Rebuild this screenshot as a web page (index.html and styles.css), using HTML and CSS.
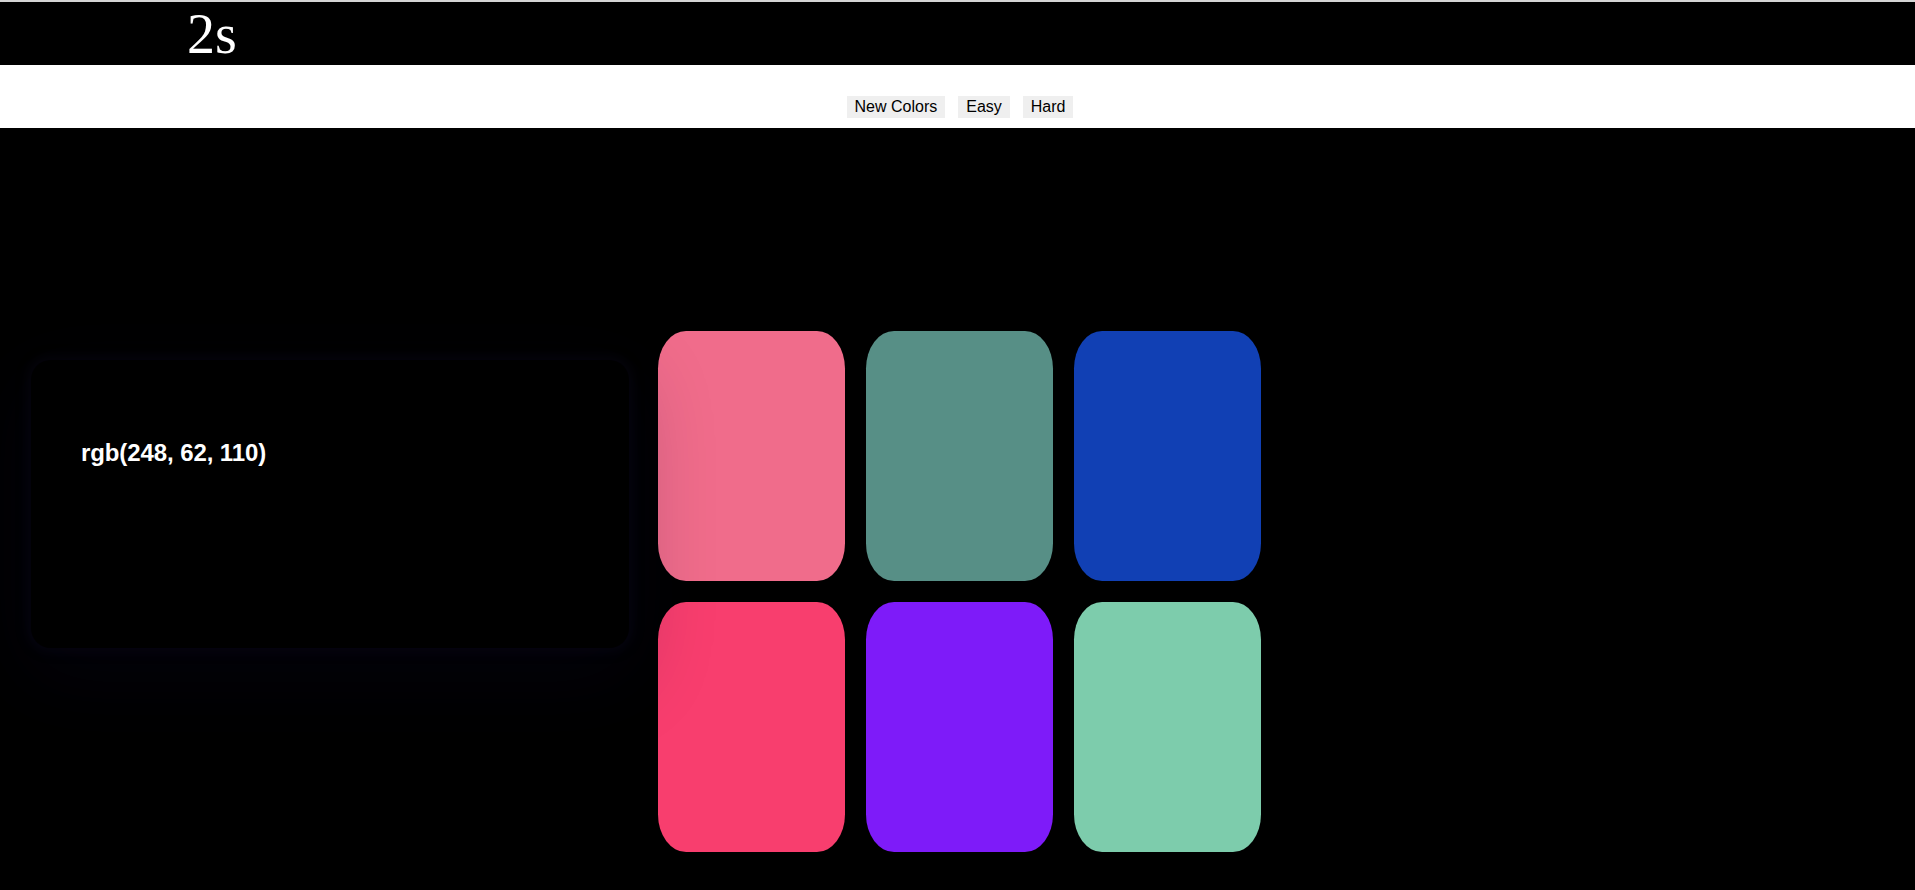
FILE: index.html
```html
<!DOCTYPE html>
<html lang="en">
<head>
<meta charset="utf-8">
<title>Color Game</title>
<link rel="stylesheet" href="styles.css">
</head>
<body>
  <header class="top-bar">
    <h1 class="timer">2s</h1>
  </header>
  <nav class="controls">
    <button class="btn">New Colors</button>
    <button class="btn">Easy</button>
    <button class="btn">Hard</button>
  </nav>
  <main class="board">
    <section class="target-card">
      <h2 class="target-text">rgb(248, 62, 110)</h2>
    </section>
    <section class="swatches">
      <div class="swatch swatch-pink"></div>
      <div class="swatch swatch-teal"></div>
      <div class="swatch swatch-blue"></div>
      <div class="swatch swatch-red"></div>
      <div class="swatch swatch-purple"></div>
      <div class="swatch swatch-mint"></div>
    </section>
  </main>
</body>
</html>
```
FILE: styles.css
```css
* { box-sizing: border-box; }

html, body {
  margin: 0;
  padding: 0;
  background: #000;
}

body {
  border-top: 2px solid #d4d4d4;
  min-height: 890px;
}

.top-bar {
  background: #000;
  height: 63px;
  padding-left: 187px;
  padding-top: 1px;
}

.timer {
  margin: 0;
  font-family: "Liberation Serif", "Times New Roman", serif;
  font-weight: normal;
  font-size: 56px;
  line-height: 62px;
  color: #fff;
}

.controls {
  background: #fff;
  height: 63px;
  padding-top: 31px;
  display: flex;
  justify-content: center;
  gap: 13px;
  padding-left: 5px;
}

.btn {
  font-family: "Liberation Sans", Arial, sans-serif;
  font-size: 16px;
  line-height: 20px;
  height: 22px;
  padding: 1px 8px;
  border: none;
  background: #efefef;
  color: #000;
  margin: 0;
}

.board {
  display: flex;
  align-items: flex-start;
  padding-left: 31px;
  background: #000;
}

.target-card {
  position: relative;
  z-index: 1;
  margin-top: 232px;
  width: 598px;
  height: 288px;
  background: #000;
  border-radius: 20px;
  padding: 78px 0 0 50px;
  box-shadow: 0 0 12px 4px rgba(18, 14, 36, 0.3),
              0 24px 80px 10px rgba(16, 10, 50, 0.2);
}

.target-text {
  margin: 0;
  font-family: "Liberation Sans", Arial, sans-serif;
  font-weight: bold;
  font-size: 24px;
  line-height: 30px;
  letter-spacing: -0.1px;
  color: #fff;
}

.swatches {
  margin-top: 203px;
  margin-left: 29px;
  display: grid;
  grid-template-columns: repeat(3, 187px);
  grid-auto-rows: 250px;
  column-gap: 21px;
  row-gap: 21px;
}

.swatch {
  border-radius: 15%;
}

.swatch-pink   { background: #f06c8b; }
.swatch-teal   { background: #578f86; }
.swatch-blue   { background: #1140b4; }
.swatch-red    { background: #f83e6e; }
.swatch-purple { background: #7e1bf9; }
.swatch-mint   { background: #7dccac; }
```
